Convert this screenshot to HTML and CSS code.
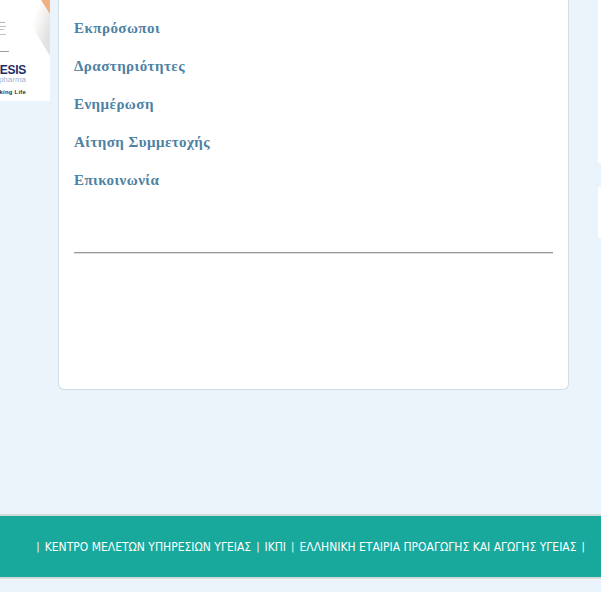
FILE: index.html
```html
<!DOCTYPE html>
<html lang="el">
<head>
  <meta charset="UTF-8" />
  <meta name="viewport" content="width=device-width, initial-scale=1.0"/>
  <title>Εκπρόσωποι</title>
  <link rel="stylesheet" href="styles.css">
</head>
<body>

  <div class="page-row">
    <div class="left-col">
      <div class="banner">
        <svg class="banner-art" width="50" height="101" viewBox="0 0 50 101">
          <defs>
            <linearGradient id="fade" x1="0" y1="0" x2="1" y2="0.5">
              <stop offset="0.55" stop-color="#ffffff"/>
              <stop offset="1" stop-color="#e4e2e0"/>
            </linearGradient>
          </defs>
          <rect width="50" height="101" fill="#fff"/>
          <polygon points="16,0 50,0 50,56" fill="url(#fade)"/>
          <polygon points="41,0 50,0 50,14" fill="#f0b182"/>
          <rect x="0" y="22" width="5" height="1" fill="#b4b6c0"/>
          <rect x="0" y="26" width="6" height="1" fill="#c0c2ca"/>
          <rect x="0" y="29" width="4" height="1" fill="#c0c2ca"/>
          <rect x="0" y="34" width="6" height="1" fill="#c0c2ca"/>
          <rect x="0" y="51" width="9" height="1" fill="#9a9ca8"/>
        </svg>
        <span class="banner-name">NESIS</span>
        <span class="banner-sub">pharma</span>
        <span class="banner-tag">king Life</span>
      </div>
    </div>

    <div class="main-card">
      <ul class="side-menu">
        <li><a href="#">Εκπρόσωποι</a></li>
        <li><a href="#">Δραστηριότητες</a></li>
        <li><a href="#">Ενημέρωση</a></li>
        <li><a href="#">Αίτηση Συμμετοχής</a></li>
        <li><a href="#">Επικοινωνία</a></li>
      </ul>
      <hr class="divider">
    </div>

    <div class="right-col">
      <div class="right-box right-box--first"></div>
      <div class="right-box right-box--second"></div>
    </div>
  </div>

  <div class="footer-bar">
    <span class="sep">|</span>
    <a href="#">ΚΕΝΤΡΟ ΜΕΛΕΤΩΝ ΥΠΗΡΕΣΙΩΝ ΥΓΕΙΑΣ</a>
    <span class="sep">|</span>
    <a href="#">ΙΚΠΙ</a>
    <span class="sep">|</span>
    <a href="#">ΕΛΛΗΝΙΚΗ ΕΤΑΙΡΙΑ ΠΡΟΑΓΩΓΗΣ ΚΑΙ ΑΓΩΓΗΣ ΥΓΕΙΑΣ</a>
    <span class="sep">|</span>
  </div>

</body>
</html>
```

FILE: styles.css
```css
html, body {
  height: 100%;
}

body {
  margin: 0;
  padding: 0;
  background: #ebf4fa;
  font-family: "DejaVu Sans", sans-serif;
  overflow: hidden;
}

.page-row {
  display: flex;
  align-items: flex-start;
  height: 514px;
}

.left-col {
  width: 50px;
  margin-right: 8px;
}

.banner {
  background: #fff;
  height: 101px;
  overflow: hidden;
  position: relative;
}

.banner-art {
  display: block;
}

.banner-name,
.banner-sub,
.banner-tag {
  position: absolute;
  right: 24px;
  white-space: nowrap;
}

.banner-name {
  top: 65px;
  font: bold 12px/10px "Liberation Sans", sans-serif;
  color: #232b66;
  letter-spacing: -0.3px;
}

.banner-sub {
  top: 76px;
  font: 8px/8px "Liberation Sans", sans-serif;
  color: #9fb3d0;
}

.banner-tag {
  top: 89px;
  font: bold 6px/7px "Liberation Sans", sans-serif;
  letter-spacing: 0.2px;
  color: #333;
}

.main-card {
  box-sizing: border-box;
  width: 511px;
  height: 390px;
  background: #fff;
  border: 1px solid #cfdfe6;
  border-top: 0;
  border-radius: 0 0 6px 6px;
  padding: 9px 15px 0;
}

.side-menu {
  list-style: none;
  margin: 0;
  padding: 0;
}

.side-menu li {
  height: 38px;
  line-height: 38px;
}

.side-menu a {
  font-family: "Liberation Serif", serif;
  font-weight: bold;
  font-size: 15px;
  letter-spacing: 0.45px;
  color: #4d82a4;
  text-decoration: none;
}

.divider {
  border: 0;
  border-top: 1px solid #999;
  border-bottom: 1px solid #ddd;
  margin: 53px 0 0;
}

.right-col {
  margin-left: 29px;
  width: 3px;
}

.right-box {
  background: #fff;
}

.right-box--first {
  height: 163px;
  margin-bottom: 24px;
}

.right-box--second {
  height: 51px;
}

.footer-bar {
  display: flex;
  align-items: center;
  gap: 4.7px;
  box-sizing: border-box;
  height: 65px;
  padding: 0 0 0 36px;
  background: #18a89c;
  border-top: 2px solid #d3dcd9;
  border-bottom: 2px solid #d3dcd9;
  box-shadow: 0 1px 0 #f6f9fb;
  font-family: "DejaVu Sans Condensed", "DejaVu Sans", sans-serif;
  font-size: 12px;
  color: #fff;
  white-space: nowrap;
}

.footer-bar a {
  color: #fff;
  text-decoration: none;
}

.footer-bar .sep {
  width: 4px;
  font-size: 11px;
  text-align: center;
}
```
